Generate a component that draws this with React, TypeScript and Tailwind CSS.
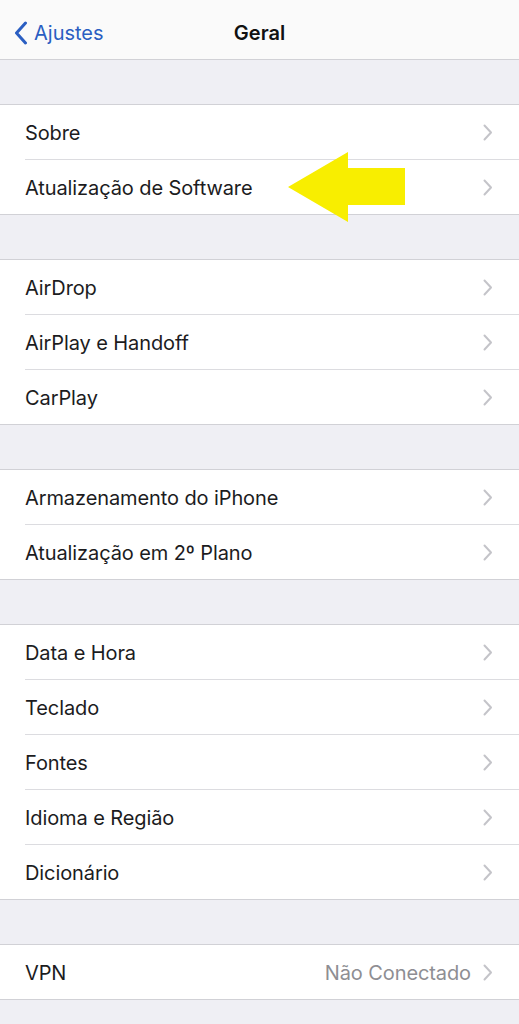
import React from 'react';

type Row = { label: string; value?: string };

const groups: Row[][] = [
  [{ label: 'Sobre' }, { label: 'Atualização de Software' }],
  [{ label: 'AirDrop' }, { label: 'AirPlay e Handoff' }, { label: 'CarPlay' }],
  [{ label: 'Armazenamento do iPhone' }, { label: 'Atualização em 2º Plano' }],
  [
    { label: 'Data e Hora' },
    { label: 'Teclado' },
    { label: 'Fontes' },
    { label: 'Idioma e Região' },
    { label: 'Dicionário' },
  ],
  [{ label: 'VPN', value: 'Não Conectado' }],
];

function Chevron() {
  return (
    <svg width="10" height="17" viewBox="0 0 10 17" fill="none" className="shrink-0">
      <path d="M1.5 1.5 L8 8.5 L1.5 15.5" stroke="#c4c4c9" strokeWidth="2" strokeLinecap="round" strokeLinejoin="round" />
    </svg>
  );
}

function Group({ rows }: { rows: Row[] }) {
  return (
    <div className="border-y border-[#d1d1d6] bg-white">
      {rows.map((row, i) => (
        <div key={row.label} className="pl-[25px]">
          <div
            className={
              'flex items-center pr-[26px] pt-[1px] ' +
              (i < rows.length - 1 ? 'h-[55px] border-b border-[#dcdce0]' : 'h-[54px]')
            }
          >
            <span className="flex-1 text-[20px] tracking-[-0.1px] text-[#1c1c1e]">{row.label}</span>
            {row.value && <span className="mr-[12px] text-[20px] tracking-[-0.1px] text-[#8e8e93]">{row.value}</span>}
            <Chevron />
          </div>
        </div>
      ))}
    </div>
  );
}

export default function App() {
  return (
    <div className="relative min-h-[1024px] w-[519px] overflow-hidden bg-[#efeff4]" style={{ fontFamily: 'Inter, "Noto Sans", sans-serif' }}>
      <div className="relative flex h-[60px] items-center justify-center border-b border-[#d1d1d6] bg-[#fafafa] pt-[6px]">
        <div className="absolute left-[14px] top-0 flex h-full items-center gap-[6px] pt-[6px] text-[#2a5ec2]">
          <svg width="14" height="24" viewBox="0 0 14 24" fill="none">
            <path d="M11.5 2 L2.5 12 L11.5 22" stroke="#2a5ec2" strokeWidth="3" strokeLinecap="round" strokeLinejoin="round" />
          </svg>
          <span className="text-[20px]">Ajustes</span>
        </div>
        <span className="text-[20px] font-semibold text-[#111]">Geral</span>
      </div>

      <div className="flex flex-col gap-[44px] pt-[44px]">
        {groups.map((g, i) => (
          <Group key={i} rows={g} />
        ))}
      </div>

      <svg className="absolute left-0 top-0" width="519" height="1024" viewBox="0 0 519 1024">
        <polygon points="288,187 348,152 348,168 405,168 405,205 348,205 348,222" fill="#f8ee00" />
      </svg>
    </div>
  );
}
